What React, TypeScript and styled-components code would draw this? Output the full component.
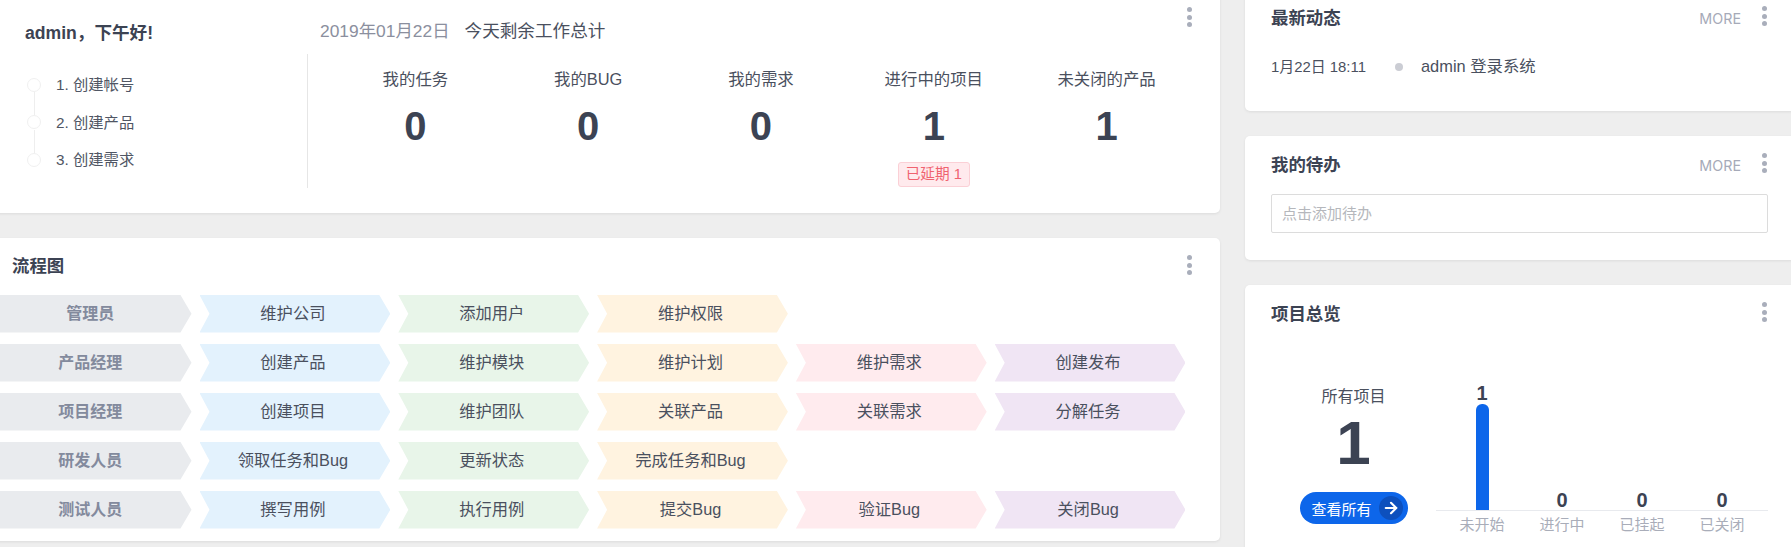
import React from "react";
import styled, { createGlobalStyle } from "styled-components";
import { ArrowRight } from "lucide-react";

const GlobalStyle = createGlobalStyle`
  html, body {
    margin: 0;
    padding: 0;
    background: #eeeeee;
  }
  * {
    box-sizing: border-box;
  }
  body {
    font-family: "Liberation Sans", "Noto Sans CJK SC", sans-serif;
    color: #3c4353;
  }
`;

const tones = {
  role: "#e9ebee",
  blue: "#e3f2fd",
  green: "#e8f5e9",
  orange: "#fff3e0",
  pink: "#ffebee",
  purple: "#f0e5f4",
};

type Tone = keyof typeof tones;

const toneOrder: Tone[] = ["blue", "green", "orange", "pink", "purple"];

const flowRows = [
  { role: "管理员", steps: ["维护公司", "添加用户", "维护权限"] },
  { role: "产品经理", steps: ["创建产品", "维护模块", "维护计划", "维护需求", "创建发布"] },
  { role: "项目经理", steps: ["创建项目", "维护团队", "关联产品", "关联需求", "分解任务"] },
  { role: "研发人员", steps: ["领取任务和Bug", "更新状态", "完成任务和Bug"] },
  { role: "测试人员", steps: ["撰写用例", "执行用例", "提交Bug", "验证Bug", "关闭Bug"] },
];

const stats = [
  { label: "我的任务", value: 0 },
  { label: "我的BUG", value: 0 },
  { label: "我的需求", value: 0 },
  { label: "进行中的项目", value: 1, badge: "已延期 1" },
  { label: "未关闭的产品", value: 1 },
];

const projectBars = [
  { label: "未开始", value: 1 },
  { label: "进行中", value: 0 },
  { label: "已挂起", value: 0 },
  { label: "已关闭", value: 0 },
];

const MenuDots = () => (
  <Dots>
    <i />
    <i />
    <i />
  </Dots>
);

const App = () => {
  return (
    <Page>
      <GlobalStyle />
      <LeftColumn>
        <WelcomeCard>
          <MenuDots />
          <WelcomeHeader>
            <Greeting>admin，下午好!</Greeting>
            <DateLine>
              <span>2019年01月22日</span>
              <strong>今天剩余工作总计</strong>
            </DateLine>
          </WelcomeHeader>
          <WelcomeBody>
            <Steps>
              {["1. 创建帐号", "2. 创建产品", "3. 创建需求"].map((step, i) => (
                <Step key={step} $last={i === 2}>
                  <StepCircle />
                  <StepText>{step}</StepText>
                </Step>
              ))}
            </Steps>
            <StatGrid>
              {stats.map((stat) => (
                <Stat key={stat.label}>
                  <StatLabel>{stat.label}</StatLabel>
                  <StatValue>{stat.value}</StatValue>
                  {stat.badge && <Badge>{stat.badge}</Badge>}
                </Stat>
              ))}
            </StatGrid>
          </WelcomeBody>
        </WelcomeCard>

        <FlowCard>
          <MenuDots />
          <FlowTitle>流程图</FlowTitle>
          <FlowRows>
            {flowRows.map((row) => (
              <FlowRow key={row.role}>
                <Chevron $tone="role" $first>
                  {row.role}
                </Chevron>
                {row.steps.map((step, i) => (
                  <Chevron key={step} $tone={toneOrder[i]}>
                    {step}
                  </Chevron>
                ))}
              </FlowRow>
            ))}
          </FlowRows>
        </FlowCard>
      </LeftColumn>

      <RightColumn>
        <SideCard $height={122}>
          <MenuDots />
          <SideHeader>
            <SideTitle>最新动态</SideTitle>
            <More>MORE</More>
          </SideHeader>
          <Activity>
            <ActivityTime>1月22日 18:11</ActivityTime>
            <ActivityDot />
            <ActivityText>admin 登录系统</ActivityText>
          </Activity>
        </SideCard>

        <SideCard $height={124}>
          <MenuDots />
          <SideHeader>
            <SideTitle>我的待办</SideTitle>
            <More>MORE</More>
          </SideHeader>
          <TodoInput readOnly placeholder="点击添加待办" />
        </SideCard>

        <SideCard $height={300}>
          <MenuDots />
          <SideHeader>
            <SideTitle>项目总览</SideTitle>
          </SideHeader>
          <Overview>
            <Totals>
              <TotalsLabel>所有项目</TotalsLabel>
              <TotalsValue>1</TotalsValue>
              <ViewAll>
                查看所有
                <ArrowCircle>
                  <ArrowRight size={18} strokeWidth={2.8} color="#fff" />
                </ArrowCircle>
              </ViewAll>
            </Totals>
            <Chart>
              <Plot>
                {projectBars.map((bar) => (
                  <PlotColumn key={bar.label}>
                    <BarValue>{bar.value}</BarValue>
                    {bar.value > 0 && <Bar />}
                  </PlotColumn>
                ))}
              </Plot>
              <AxisLabels>
                {projectBars.map((bar) => (
                  <AxisLabel key={bar.label}>{bar.label}</AxisLabel>
                ))}
              </AxisLabels>
            </Chart>
          </Overview>
        </SideCard>
      </RightColumn>
    </Page>
  );
};

const Page = styled.div`
  display: flex;
  align-items: flex-start;
  width: 1791px;
  height: 547px;
  overflow: hidden;
`;

const LeftColumn = styled.div`
  display: flex;
  flex-direction: column;
  flex: none;
  gap: 25px;
  width: 1230px;
  margin: -10px 0 0 -10px;
`;

const RightColumn = styled.div`
  display: flex;
  flex-direction: column;
  flex: none;
  gap: 25px;
  width: 550px;
  margin: -11px 0 0 25px;
`;

const Card = styled.div`
  position: relative;
  background: #fff;
  border-radius: 5px;
  box-shadow: 0 1px 3px rgba(0, 0, 0, 0.08);
`;

const Dots = styled.div`
  position: absolute;
  top: 17px;
  right: 28px;
  display: flex;
  flex-direction: column;
  gap: 2.7px;

  i {
    display: block;
    width: 5px;
    height: 5px;
    border-radius: 50%;
    background: #a9aebb;
  }
`;

const WelcomeCard = styled(Card)`
  height: 223px;
`;

const WelcomeHeader = styled.div`
  display: flex;
  align-items: flex-start;
  height: 64px;
  padding-top: 10px;
`;

const Greeting = styled.div`
  width: 330px;
  padding: 22px 0 0 35px;
  font-size: 17.6px;
  line-height: 22px;
  font-weight: 700;
`;

const DateLine = styled.div`
  display: flex;
  gap: 15px;
  padding-top: 20px;
  font-size: 17.4px;
  line-height: 22px;
  color: #8b8f9e;

  strong {
    font-size: 17.6px;
    font-weight: 400;
    color: #4a505e;
  }
`;

const WelcomeBody = styled.div`
  display: flex;
  height: 134px;
`;

const Steps = styled.div`
  flex: none;
  width: 318px;
  padding: 12px 0 0 37px;
  border-right: 1px solid #e6e6e6;
`;

const Step = styled.div<{ $last?: boolean }>`
  position: relative;
  display: flex;
  align-items: center;
  gap: 15px;
  height: 37.5px;

  &::before {
    content: "";
    display: ${(p) => (p.$last ? "none" : "block")};
    position: absolute;
    left: 6.5px;
    top: 26px;
    width: 1px;
    height: 23px;
    background: #eeeeee;
  }
`;

const StepCircle = styled.span`
  flex: none;
  width: 14px;
  height: 14px;
  border: 1px solid #f0f0f0;
  border-radius: 50%;
`;

const StepText = styled.span`
  padding-bottom: 3px;
  font-size: 15.3px;
  color: #505664;
`;

const StatGrid = styled.div`
  display: grid;
  grid-template-columns: repeat(5, 172.8px);
  margin-left: 21px;
`;

const Stat = styled.div`
  display: flex;
  flex-direction: column;
  align-items: center;
  padding-top: 13px;
`;

const StatLabel = styled.div`
  font-size: 16.4px;
  line-height: 24px;
  color: #4a505e;
`;

const StatValue = styled.div`
  margin-top: 12px;
  font-size: 40px;
  line-height: 46px;
  font-weight: 700;
`;

const Badge = styled.div`
  margin-top: 13px;
  width: 72px;
  height: 25px;
  border: 1px solid #fbd0d6;
  border-radius: 3px;
  background: #ffeaed;
  color: #f0626f;
  font-size: 14.7px;
  line-height: 22px;
  text-align: center;
`;

const FlowCard = styled(Card)`
  height: 303px;
`;

const FlowTitle = styled.div`
  padding: 17px 0 0 22px;
  font-size: 17.4px;
  line-height: 22px;
  font-weight: 700;
`;

const FlowRows = styled.div`
  display: grid;
  grid-auto-rows: 37.5px;
  row-gap: 11.5px;
  margin-top: 18px;
  padding-left: 10px;
`;

const FlowRow = styled.div`
  display: flex;
  gap: 8px;
`;

const Chevron = styled.div<{ $tone: Tone; $first?: boolean }>`
  display: flex;
  align-items: center;
  justify-content: center;
  flex: none;
  width: ${(p) => (p.$first ? "191.5px" : "190.8px")};
  padding: 0 ${(p) => (p.$first ? "11px" : "4px")} 3px 0;
  background: ${(p) => tones[p.$tone]};
  clip-path: ${(p) =>
    p.$first
      ? "polygon(0 0, calc(100% - 11px) 0, 100% 50%, calc(100% - 11px) 100%, 0 100%)"
      : "polygon(0 0, calc(100% - 11px) 0, 100% 50%, calc(100% - 11px) 100%, 0 100%, 10px 50%)"};
  font-size: ${(p) => (p.$first ? "16px" : "16.3px")};
  font-weight: ${(p) => (p.$first ? 700 : 400)};
  color: ${(p) => (p.$first ? "#838a9d" : "#4a505e")};
`;

const SideCard = styled(Card)<{ $height: number }>`
  height: ${(p) => p.$height}px;
  padding: 0 27px 0 26px;
`;

const SideHeader = styled.div`
  display: flex;
  align-items: center;
  justify-content: space-between;
  height: 56px;
`;

const SideTitle = styled.div`
  padding-bottom: 2px;
  font-size: 17.4px;
  font-weight: 700;
`;

const More = styled.div`
  margin: 2px 27px 0 0;
  font-family: Inter, "Liberation Sans", sans-serif;
  font-size: 14.3px;
  color: #a6aab8;
`;

const Activity = styled.div`
  display: flex;
  align-items: center;
  height: 24px;
  margin-top: 8px;
`;

const ActivityTime = styled.div`
  width: 124px;
  font-size: 14.9px;
  color: #4a505e;
`;

const ActivityDot = styled.span`
  width: 8px;
  height: 8px;
  margin-top: 4px;
  border-radius: 50%;
  background: #cbcdd4;
`;

const ActivityText = styled.div`
  margin-left: 18px;
  font-size: 16.4px;
  color: #4a505e;
`;

const TodoInput = styled.input`
  display: block;
  width: 100%;
  height: 39px;
  margin-top: 2px;
  padding: 0 10px;
  border: 1px solid #dcdcdc;
  border-radius: 2px;
  outline: none;
  font-family: inherit;
  font-size: 15px;

  &::placeholder {
    color: #b5b7bc;
    opacity: 1;
  }
`;

const Overview = styled.div`
  display: flex;
`;

const Totals = styled.div`
  display: flex;
  flex-direction: column;
  align-items: center;
  flex: none;
  width: 165px;
  padding-top: 44px;
`;

const TotalsLabel = styled.div`
  font-size: 16px;
  line-height: 24px;
  color: #4a505e;
`;

const TotalsValue = styled.div`
  margin-top: 3px;
  font-size: 62px;
  line-height: 62px;
  font-weight: 700;
`;

const ViewAll = styled.div`
  display: flex;
  align-items: center;
  justify-content: space-between;
  width: 108px;
  height: 32px;
  margin-top: 18px;
  padding: 0 5px 0 12px;
  border-radius: 16px;
  background: #0d66ea;
  color: #fff;
  font-size: 15px;
`;

const ArrowCircle = styled.span`
  display: flex;
  align-items: center;
  justify-content: center;
  width: 24px;
  height: 24px;
  border-radius: 50%;
  background: #0d50bd;
`;

const Chart = styled.div`
  flex: 1;
`;

const Plot = styled.div`
  display: grid;
  grid-template-columns: repeat(4, 80px);
  height: 170px;
  padding: 0 6px;
  border-bottom: 1px solid #e8eaee;
`;

const PlotColumn = styled.div`
  display: flex;
  flex-direction: column;
  align-items: center;
  justify-content: flex-end;
`;

const BarValue = styled.div`
  font-size: 20px;
  line-height: 20px;
  font-weight: 700;
`;

const Bar = styled.div`
  width: 13px;
  height: 106px;
  margin-top: 1px;
  border-radius: 6px 6px 0 0;
  background: #0d66ea;
`;

const AxisLabels = styled.div`
  display: grid;
  grid-template-columns: repeat(4, 80px);
  margin-top: 2px;
  padding: 0 6px;
`;

const AxisLabel = styled.div`
  font-size: 15px;
  line-height: 24px;
  color: #a9adb9;
  text-align: center;
`;

export default App;
